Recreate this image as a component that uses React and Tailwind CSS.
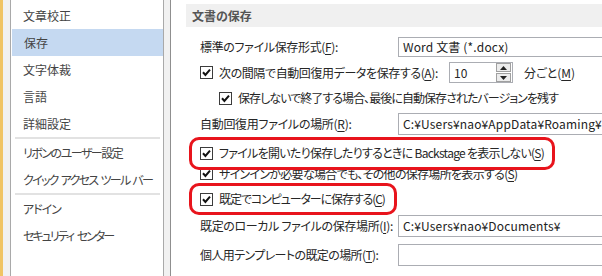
import React from "react";

function Check() {
  return (
    <svg width="13" height="13" viewBox="0 0 13 13" className="shrink-0">
      <rect x="0.5" y="0.5" width="12" height="12" fill="#fff" stroke="#3c3c3c" />
      <path d="M3 6.3 L5.4 8.9 L10 3.6" fill="none" stroke="#111" strokeWidth="2" />
    </svg>
  );
}

const U = ({ children }) => <span className="underline underline-offset-2">{children}</span>;

function NavRow({ label, selected, cls = "" }) {
  return (
    <div
      className={
        "h-[27px] flex items-center pl-[12px] text-[#444] whitespace-nowrap " +
        (selected ? "bg-[#c5d9f1] ml-[1px] pl-[11px] " : "") +
        cls
      }
    >
      {label}
    </div>
  );
}

function Sep() {
  return <div className="h-[2px] bg-[#e2e2e2] ml-[4px] mr-[3px]" />;
}

function Field({ children }) {
  return (
    <div className="w-[240px] shrink-0 h-full border border-[#abadb3] bg-white flex items-center pl-[4px] text-[#222] whitespace-nowrap overflow-hidden tracking-[0.15px]">
      {children}
    </div>
  );
}

export default function App() {
  return (
    <div className="w-[602px] h-[276px] overflow-hidden bg-white flex text-[12px] leading-none font-['Noto_Sans_CJK_JP',sans-serif] [font-feature-settings:'palt']">
      <div className="w-[3px] shrink-0 bg-[#f0c464]" />
      <div className="w-[7px] shrink-0 bg-[#f1f1f1]" />
      <div className="w-[154px] shrink-0 border-x border-[#a9a9a9] bg-white pt-[2px]">
        <NavRow label="文章校正" />
        <NavRow label="保存" selected />
        <NavRow label="文字体裁" />
        <NavRow label="言語" />
        <NavRow label="詳細設定" />
        <Sep />
        <NavRow label="リボンのユーザー設定" cls="tracking-[-1.5px]" />
        <NavRow label="クイック アクセス ツール バー" cls="tracking-[-1.7px] [word-spacing:2px]" />
        <Sep />
        <NavRow label="アドイン" cls="tracking-[-1px]" />
        <NavRow label="セキュリティ センター" cls="tracking-[-2px] [word-spacing:3px]" />
      </div>
      <div className="w-[6px] shrink-0 bg-[#f1f1f1]" />
      <div className="flex-1 min-w-0 border-l border-[#8f8f8f] relative text-[#262626]">
        <div className="ml-[15px] mt-[4px] h-[23px] bg-[#f0f0f0] pl-[6px] flex items-center font-bold text-[#555]">
          文書の保存
        </div>

        <div className="mt-[10px] h-[20px] pl-[29px] flex items-center">
          <div className="w-[198px] shrink-0 whitespace-nowrap tracking-[-0.35px]">
            標準のファイル保存形式(<U>F</U>):
          </div>
          <Field>Word 文書 (*.docx)</Field>
        </div>

        <div className="mt-[5px] h-[21px] pl-[29px] flex items-center">
          <div className="w-[249px] shrink-0 flex items-center gap-[6px] whitespace-nowrap tracking-[-0.4px]">
            <Check />
            <span>次の間隔で自動回復用データを保存する(<U>A</U>):</span>
          </div>
          <div className="w-[64px] shrink-0 h-full border border-[#abadb3] flex items-center">
            <span className="flex-1 pl-[4px]">10</span>
            <div className="w-[15px] h-[19px] mr-[1px] flex flex-col gap-[1px]">
              <div className="flex-1 border border-[#a0a0a0] bg-[#ececec] flex items-center justify-center">
                <svg width="7" height="4" viewBox="0 0 7 4"><path d="M0 4 L3.5 0 L7 4 Z" fill="#222" /></svg>
              </div>
              <div className="flex-1 border border-[#a0a0a0] bg-[#ececec] flex items-center justify-center">
                <svg width="7" height="4" viewBox="0 0 7 4"><path d="M0 0 L3.5 4 L7 0 Z" fill="#222" /></svg>
              </div>
            </div>
          </div>
          <span className="ml-[11px] whitespace-nowrap">分ごと(<U>M</U>)</span>
        </div>

        <div className="h-[30px] pl-[48px] flex items-center gap-[6px] whitespace-nowrap tracking-[-0.95px]">
          <Check />
          <span>保存しないで終了する場合、最後に自動保存されたバージョンを残す</span>
        </div>

        <div className="h-[22px] pl-[29px] flex items-center">
          <div className="w-[198px] shrink-0 whitespace-nowrap tracking-[-0.3px]">
            自動回復用ファイルの場所(<U>R</U>):
          </div>
          <Field>C:¥Users¥nao¥AppData¥Roaming¥</Field>
        </div>

        <div className="mt-[7px] h-[22px] pl-[29px] flex items-center gap-[6px] whitespace-nowrap tracking-[-0.72px]">
          <Check />
          <span>ファイルを開いたり保存したりするときに Backstage を表示しない(<U>S</U>)</span>
        </div>

        <div className="h-[19px] pl-[29px] flex items-center gap-[6px] whitespace-nowrap tracking-[-0.7px]">
          <Check />
          <span>サインインが必要な場合でも、その他の保存場所を表示する(<U>S</U>)</span>
        </div>

        <div className="h-[32px] pl-[29px] flex items-center gap-[6px] whitespace-nowrap tracking-[-1.1px]">
          <Check />
          <span>既定でコンピューターに保存する(<U>C</U>)</span>
        </div>

        <div className="h-[22px] pl-[29px] flex items-center">
          <div className="w-[198px] shrink-0 whitespace-nowrap tracking-[-0.35px]">
            既定のローカル ファイルの保存場所(<U>I</U>):
          </div>
          <Field>C:¥Users¥nao¥Documents¥</Field>
        </div>

        <div className="mt-[7px] h-[22px] pl-[29px] flex items-center">
          <div className="w-[198px] shrink-0 whitespace-nowrap tracking-[-0.6px]">
            個人用テンプレートの既定の場所(<U>T</U>):
          </div>
          <Field></Field>
        </div>

        <div className="absolute left-[18px] top-[137px] w-[366px] h-[33px] border-[3px] border-[#e8141c] rounded-[10px]" />
        <div className="absolute left-[18px] top-[183px] w-[208px] h-[32px] border-[3px] border-[#e8141c] rounded-[10px]" />
      </div>
    </div>
  );
}
